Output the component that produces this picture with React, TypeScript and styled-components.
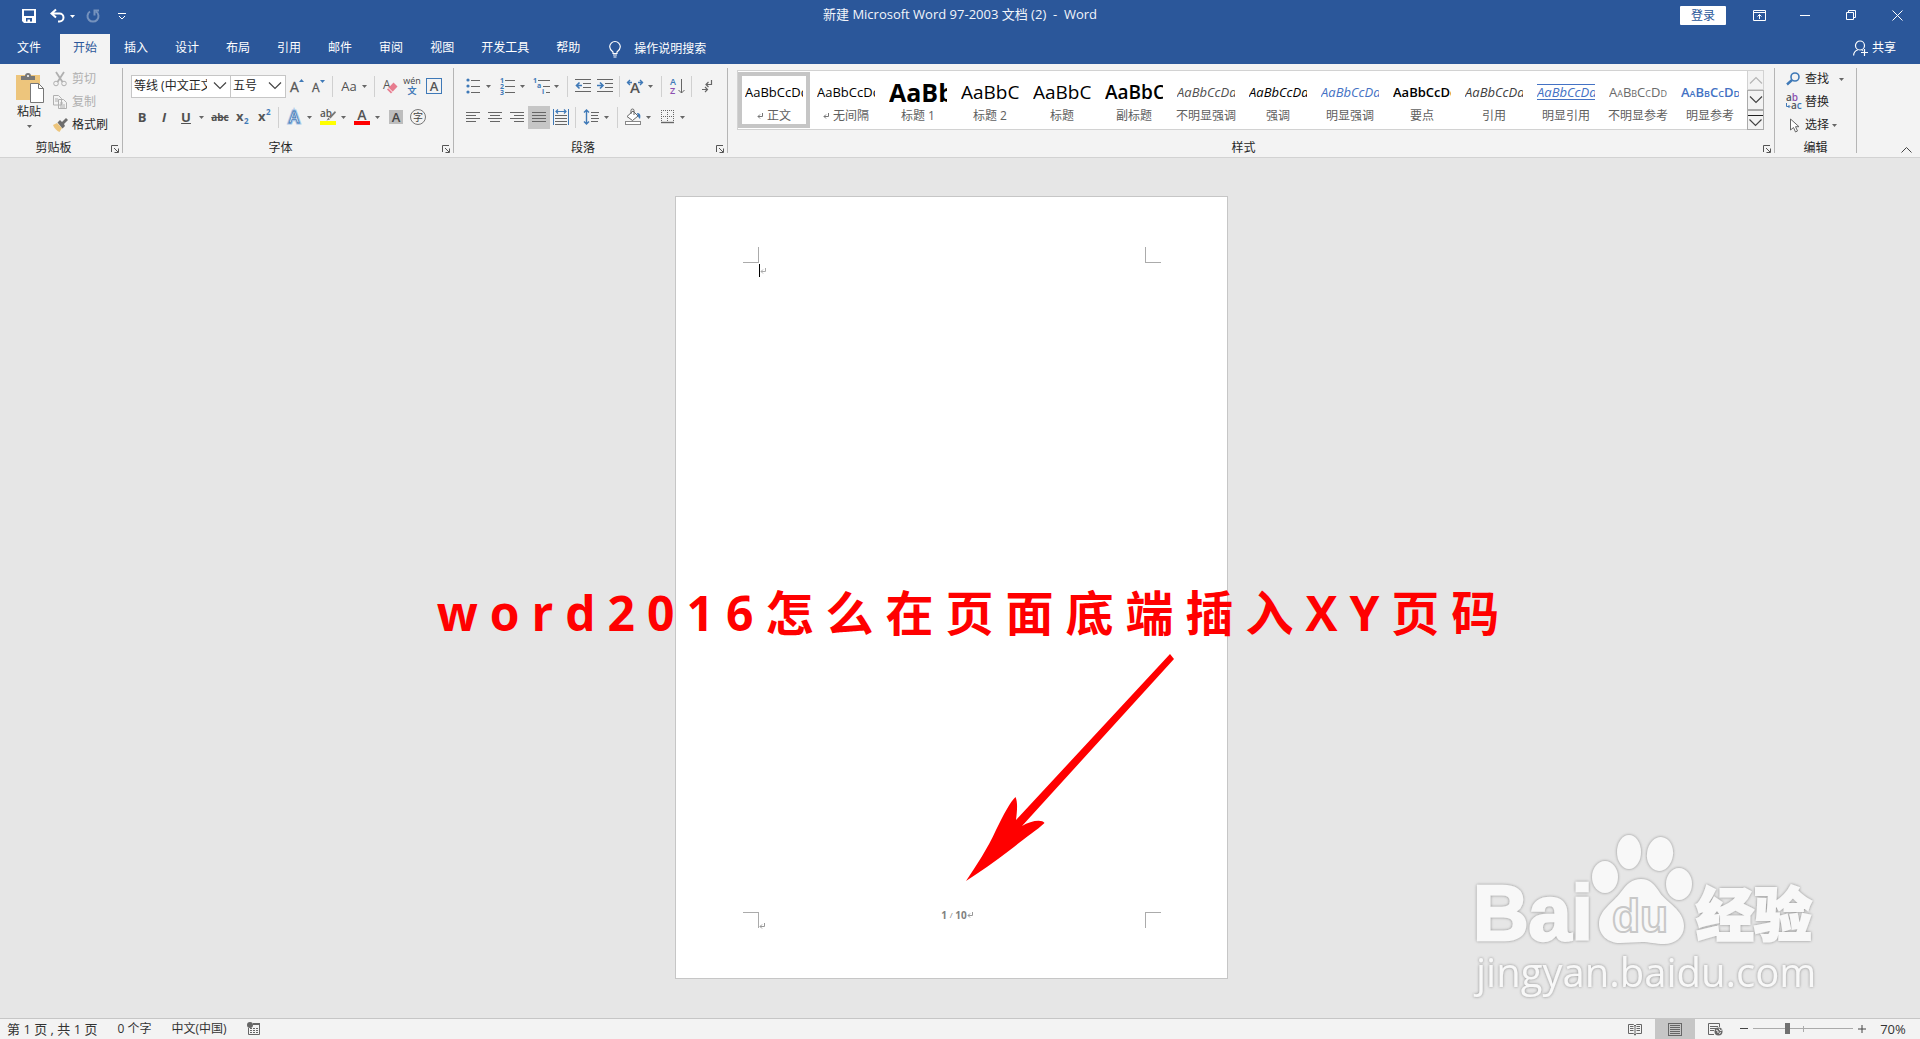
import React from "react";
import styled, { createGlobalStyle, css } from "styled-components";

const BLUE = "#2b579a";
const GREY = "#666666";
const ACCENT = "#3f79b7";

const GlobalStyle = createGlobalStyle`
  *, *::before, *::after { box-sizing: border-box; }
  body {
    margin: 0;
    background: #e6e6e6;
    color: #262626;
    font-family: "Open Sans", "Noto Sans CJK SC", sans-serif;
    font-size: 12px;
    line-height: 16px;
  }
  button, select, input {
    font: inherit;
    color: inherit;
    margin: 0;
    padding: 0;
    border: 0;
    background: none;
    border-radius: 0;
  }
  svg { display: block; flex: none; overflow: visible; }
`;

const Shell = styled.div`
  display: flex;
  flex-direction: column;
  min-height: 100vh;
  white-space: nowrap;
`;

/* ---------- title bar ---------- */

const TitleBar = styled.header`
  display: grid;
  grid-template-columns: 1fr auto 1fr;
  height: 34px;
  background: ${BLUE};
  color: #f2f5fa;
`;

const QuickAccess = styled.div`
  display: flex;
  align-items: center;
  padding: 0 0 2px 16px;
  gap: 5px;
`;

const QuickButton = styled.button<{ $w?: number; $dim?: boolean }>`
  display: flex;
  align-items: center;
  justify-content: center;
  gap: 5px;
  width: ${(p) => p.$w ?? 26}px;
  height: 24px;
  opacity: ${(p) => (p.$dim ? 0.35 : 1)};
`;

const DocTitle = styled.h1`
  margin: 0;
  font-size: 13px;
  font-weight: 400;
  line-height: 28px;
  white-space: pre;
`;

const WindowControls = styled.div`
  display: flex;
  justify-content: flex-end;
`;

const SignIn = styled.button`
  width: 46px;
  height: 19px;
  margin: 6px 10px 0 0;
  border-radius: 1px;
  background: #fff;
  color: ${BLUE};
  line-height: 18px;
`;

const WindowButton = styled.button`
  display: flex;
  align-items: center;
  justify-content: center;
  width: 46px;
  height: 30px;
`;

/* ---------- tabs ---------- */

const TabBar = styled.nav`
  display: flex;
  gap: 1px;
  height: 30px;
  background: ${BLUE};
  color: #fff;
`;

const Tab = styled.button<{ $active?: boolean; $file?: boolean }>`
  padding: ${(p) => (p.$file ? "0 18px 2px 17px" : "0 13px 2px")};
  background: ${(p) => (p.$active ? "#f3f3f3" : "transparent")};
  color: ${(p) => (p.$active ? BLUE : "#fff")};
`;

const TellMe = styled.button`
  display: flex;
  align-items: center;
  gap: 13px;
  padding: 0 15px;
`;

const Share = styled.button`
  display: flex;
  align-items: center;
  gap: 4px;
  margin-left: auto;
  padding: 0 24px 2px 0;
`;

/* ---------- ribbon ---------- */

const Ribbon = styled.section`
  display: flex;
  height: 94px;
  background: #f3f3f3;
  border-bottom: 1px solid #d2d2d2;
`;

const GroupBox = styled.div<{ $w?: number }>`
  display: flex;
  flex-direction: column;
  min-width: 0;
  ${(p) => (p.$w ? css`flex: none; width: ${p.$w}px;` : css`flex: 1;`)}
`;

const GroupContent = styled.div`
  display: flex;
  flex: 1;
  min-height: 0;
`;

const GroupFooter = styled.div`
  display: flex;
  height: 18px;
  line-height: 18px;
`;

const GroupLabel = styled.span`
  flex: 1;
  text-align: center;
`;

const Launcher = styled.button`
  display: flex;
  align-items: center;
  width: 15px;
  height: 20px;
  padding-left: 4px;
`;

const Divider = styled.div`
  flex: none;
  width: 1px;
  margin: 4px 0;
  background: #b5b5b5;
`;

const Rows = styled.div`
  display: flex;
  flex-direction: column;
  gap: 7px;
  padding: 10px 0 0 8px;
`;

const ToolRow = styled.div`
  display: flex;
  align-items: center;
  height: 24px;
`;

const Tool = styled.button<{ $w?: number; $on?: boolean }>`
  display: flex;
  flex: none;
  align-items: center;
  justify-content: center;
  gap: 5px;
  width: ${(p) => p.$w ?? 22}px;
  height: 23px;
  background: ${(p) => (p.$on ? "#c6c6c6" : "transparent")};
  color: #505050;
`;

const MoreButton = styled(Tool)`
  width: 12px;
  padding-right: 4px;
`;

const ToolSep = styled.span`
  flex: none;
  width: 1px;
  height: 21px;
  margin: 0 4px 0 3px;
  background: #d0d0d0;
`;

const Glyph = styled.span<{ $bold?: boolean; $italic?: boolean; $line?: string; $size?: number }>`
  color: #505050;
  font-size: ${(p) => p.$size ?? 13}px;
  font-weight: ${(p) => (p.$bold ? 700 : 400)};
  font-style: ${(p) => (p.$italic ? "italic" : "normal")};
  text-decoration: ${(p) => p.$line ?? "none"};
`;

const Combo = styled.label<{ $w: number }>`
  display: grid;
  flex: none;
  align-items: center;
  width: ${(p) => p.$w}px;
  height: 23px;
  margin-right: -1px;
  border: 1px solid #c6c6c6;
  background: #fff;

  & > * { grid-area: 1 / 1; }
  & > svg { justify-self: end; margin-right: 3px; pointer-events: none; }
`;

const ComboSelect = styled.select`
  appearance: none;
  width: 100%;
  min-width: 0;
  height: 21px;
  padding: 0 23px 0 2px;
  overflow: hidden;
`;

const PasteButton = styled.button`
  display: flex;
  flex-direction: column;
  align-items: center;
  width: 44px;
  margin-left: 7px;
  padding-top: 8px;
  & > span { margin: 1px 0 5px; }
`;

const Commands = styled.div`
  display: flex;
  flex-direction: column;
  gap: 1px;
  padding: 4px 0 0 2px;
`;

const Command = styled.button<{ $off?: boolean }>`
  display: flex;
  align-items: center;
  gap: 4px;
  height: 22px;
  color: ${(p) => (p.$off ? "#b0b0b0" : "#262626")};
`;

const EditCommands = styled(Commands)`
  padding-left: 11px;
  & > button { gap: 3px; }
`;

const RibbonEnd = styled.div`
  display: flex;
  flex: none;
  align-items: flex-end;
  justify-content: flex-end;
  width: 63px;
  padding: 0 8px 2px 0;
`;

const CollapseButton = styled.button`
  padding: 2px 0;
`;

/* ---------- style gallery ---------- */

const Gallery = styled.div`
  display: flex;
  flex: 1;
  min-width: 0;
  height: 60px;
  margin: 6px 10px 0 9px;
  border: 1px solid #d2d2d2;
  border-right: 0;
  background: #fff;
`;

const GalleryItems = styled.div`
  display: flex;
  flex: 1;
  min-width: 0;
  overflow: hidden;
  padding: 1px 0;
`;

const StyleItem = styled.button<{ $on?: boolean }>`
  display: flex;
  flex: 0 0 72px;
  flex-direction: column;
  align-items: center;
  border: 4px solid ${(p) => (p.$on ? "#c6c6c6" : "transparent")};
`;

type Look = "plain" | "h1" | "h2" | "title" | "subtitle";

const looks: Record<Look, ReturnType<typeof css>> = {
  plain: css`font-size: 13px;`,
  h1: css`font-size: 25px; font-weight: 700;`,
  h2: css`font-size: 19px;`,
  title: css`font-size: 19px;`,
  subtitle: css`font-size: 19px; font-weight: 600;`,
};

const PreviewBox = styled.span`
  display: flex;
  align-items: center;
  width: 58px;
  height: 32px;
  overflow: hidden;
`;

const Preview = styled.span<{
  $look: Look;
  $color?: string;
  $italic?: boolean;
  $bold?: boolean;
  $caps?: boolean;
  $rules?: boolean;
}>`
  flex: none;
  line-height: 32px;
  color: ${(p) => p.$color ?? "#000"};
  ${(p) => looks[p.$look]}
  ${(p) => p.$italic && css`font-style: italic;`}
  ${(p) => p.$bold && css`font-weight: 600;`}
  ${(p) => p.$caps && css`font-variant: small-caps;`}
  ${(p) =>
    p.$rules &&
    css`
      line-height: 14px;
      border-top: 1px solid ${p.$color};
      border-bottom: 1px solid ${p.$color};
    `}
`;

const StyleName = styled.span`
  display: flex;
  align-items: center;
  justify-content: center;
  gap: 4px;
  color: #606060;
  line-height: 16px;
`;

const GalleryScroll = styled.div`
  display: flex;
  flex: none;
  flex-direction: column;
  width: 17px;
  margin: -1px 0;
`;

const ScrollButton = styled.button<{ $off?: boolean }>`
  display: flex;
  flex: 1;
  align-items: center;
  justify-content: center;
  border: 1px solid ${(p) => (p.$off ? "#d2d2d2" : "#ababab")};
  background: #f3f3f3;
`;

/* ---------- document ---------- */

const Canvas = styled.main`
  position: relative;
  flex: 1;
  padding: 38px 17px 39px 0;
  background: #e6e6e6;
`;

const Page = styled.article`
  display: flex;
  flex-direction: column;
  width: 553px;
  height: 783px;
  margin: 0 auto;
  padding: 50px 66px 49px 67px;
  border: 1px solid #c6c6c6;
  background: #fff;
`;

const MarginRow = styled.div`
  display: flex;
  justify-content: space-between;
`;

const Corner = styled.span<{ $v: "top" | "bottom"; $h: "left" | "right" }>`
  width: 16px;
  height: 16px;
  border: 0 solid #ababab;
  border-${(p) => p.$v}-width: 1px;
  border-${(p) => p.$h}-width: 1px;
`;

const Body = styled.div`
  display: flex;
  flex: 1;
  flex-direction: column;
  padding: 1px 0 0 16px;
`;

const Caret = styled.div`
  display: flex;
  align-items: center;
  height: 13px;
  border-left: 1px solid #000;
`;

const FooterText = styled.p`
  display: flex;
  align-items: center;
  height: 6px;
  margin: 0;
  padding-left: 10px;
  color: #808080;
  font-size: 10px;
  font-weight: 700;
  white-space: pre;
`;

const Slash = styled.span`
  font-size: 8px;
  font-weight: 400;
`;

const EndMark = styled.div`
  padding-left: 16px;
  margin-top: -5px;
`;

const Headline = styled.p`
  position: absolute;
  top: 420px;
  left: 0;
  right: 0;
  margin: 0;
  padding-left: 28px;
  color: #ff0000;
  font-family: "Open Sans", "Noto Sans CJK SC", sans-serif;
  font-size: 48px;
  font-weight: 700;
  line-height: 70px;
  letter-spacing: 12px;
  text-align: center;
`;

const Arrow = styled.svg`
  position: absolute;
  top: 494px;
  left: calc(50% + 4px);
`;

const Watermark = styled.svg`
  position: absolute;
  right: 70px;
  bottom: 8px;
`;

/* ---------- status bar ---------- */

const StatusBar = styled.footer`
  display: flex;
  align-items: center;
  height: 21px;
  padding: 0 0 1px 7px;
  border-top: 1px solid #c6c6c6;
  background: #f3f3f3;
  color: #333;
`;

const StatusItem = styled.button<{ $wide?: boolean }>`
  margin-right: 20px;
  font-size: ${(p) => (p.$wide ? 13 : 12)}px;
`;

const ViewSwitch = styled.div`
  display: flex;
  height: 20px;
  margin: 0 0 -1px auto;
`;

const ViewButton = styled.button<{ $on?: boolean }>`
  display: flex;
  align-items: center;
  justify-content: center;
  width: 40px;
  background: ${(p) => (p.$on ? "#c6c6c6" : "transparent")};
`;

const ZoomButton = styled.button`
  display: flex;
  align-items: center;
  justify-content: center;
  width: 18px;
  height: 20px;
`;

const ZoomRange = styled.input`
  appearance: none;
  width: 100px;
  height: 20px;
  background:
    linear-gradient(#ababab, #ababab) center / 1px 6px no-repeat,
    linear-gradient(#ababab, #ababab) center / 100% 1px no-repeat;
  &::-webkit-slider-thumb {
    appearance: none;
    width: 5px;
    height: 11px;
    background: #707070;
  }
`;

const ZoomValue = styled.button`
  width: 49px;
  padding-right: 5px;
  font-size: 13px;
  text-align: center;
`;

/* ---------- icons ---------- */

const Svg = ({ w, h, children }: { w: number; h: number; children: React.ReactNode }) => (
  <svg width={w} height={h} viewBox={`0 0 ${w} ${h}`} fill="none" aria-hidden="true">
    {children}
  </svg>
);

const Triangle = ({ color = GREY }: { color?: string }) => (
  <Svg w={5} h={3}><path d="M0 0h5L2.5 3z" fill={color} /></Svg>
);

const Chevron = ({ up, color = "#444" }: { up?: boolean; color?: string }) => (
  <Svg w={14} h={8}><path d={up ? "M1 7.5 7 1.5l6 6" : "M1 .5l6 6 6-6"} stroke={color} strokeWidth="1.2" /></Svg>
);

const Return = ({ color = "#777" }: { color?: string }) => (
  <Svg w={6} h={6}><path d="M5.5 0v3.500H1M3 1.500 1 3.500 3 5.500" stroke={color} /></Svg>
);

const LauncherIcon = () => (
  <Svg w={8} h={8}><path d="M.5 7V.5H7M3 3l4 4M7.500 3.500v4h-4" stroke="#555" /></Svg>
);

const SaveIcon = () => (
  <Svg w={14} h={14}>
    <path d="M0 0h14v14H2l-2-2zM2 1.500v5.500h10V1.500zM4 9v3.500h1.500V10.500H8v2h2V9z" fill="#fff" fillRule="evenodd" />
  </Svg>
);
const UndoIcon = () => (
  <Svg w={15} h={14}><path d="M1.500 4.500h8a4 4 0 0 1 0 8H8M6 .5l-4.500 4 4.500 4" stroke="#fff" strokeWidth="2" /></Svg>
);
const RedoIcon = () => (
  <Svg w={14} h={14}><path d="M4 2.500A5.500 5.500 0 1 0 10 2.500M8.500 6.500V1.500H13" stroke="#fff" strokeWidth="2" /></Svg>
);
const CustomizeIcon = () => (
  <Svg w={8} h={7}><path d="M0 .5h8M1 3l3 3 3-3" stroke="#fff" /></Svg>
);

const lines = (rows: [number, number][], color = GREY, top = 0.5, step = 3) => (
  <path d={rows.map(([a, b], i) => `M${a} ${top + i * step}H${b}`).join("")} stroke={color} />
);

const PasteIcon = () => (
  <Svg w={29} h={31}>
    <rect x="1" y="3" width="24" height="25" fill="#edc57c" />
    <path d="M6 8V4h4a3 3 0 0 1 6 0h4v4z" fill="#777" />
    <circle cx="13" cy="4" r="1" fill="#fff" />
    <path d="M15.500 11.500h8l5 5v14h-13z" fill="#fff" stroke="#777" />
    <path d="M23.500 11.500v5h5" stroke="#777" />
  </Svg>
);
const CutIcon = () => (
  <Svg w={15} h={15}>
    <path d="M3 0l6.500 10M11 0 4.500 10" stroke="#b0b0b0" strokeWidth="1.800" />
    <circle cx="3" cy="11.500" r="2.300" stroke="#b0b0b0" /><circle cx="11" cy="11.500" r="2.300" stroke="#b0b0b0" />
  </Svg>
);
const CopyIcon = () => (
  <Svg w={15} h={14}>
    <path d="M.5 .5h5l3 3v6.500h-8zM5.500 4.500h5l3 3v6h-8z" fill="#f3f3f3" stroke="#b0b0b0" />
    <path d="M2 4h3M2 6h3M7 8h3M7 10h5M7 12h5" stroke="#b0b0b0" />
  </Svg>
);
const BrushIcon = () => (
  <Svg w={15} h={14}>
    <path d="M0 7l4-2 5 5-2.500 4C4 13 1 10 0 7z" fill="#edc57c" />
    <path d="M4.500 4.500 7 2l2 2 4-4 2 2-4 4 1 2-2.500 2.500z" fill="#6d6d6d" />
  </Svg>
);

const GrowIcon = ({ down }: { down?: boolean }) => (
  <Svg w={14} h={16}>
    <text x="1" y="14" fontSize={down ? 12 : 14} fill="#555" stroke="#555" strokeWidth=".3">A</text>
    <path d={down ? "M9 2h5l-2.500 3z" : "M10 4h5L12.500 1z"} fill={ACCENT} />
  </Svg>
);
const EraserIcon = () => (
  <Svg w={14} h={17}>
    <text x="0" y="11" fontSize="12" fill="#555">A</text>
    <path d="M4 11.500 10.500 4.500l4 4-6.500 7z" fill="#e77c8e" /><path d="M5.500 10l4 4" stroke="#fff" />
  </Svg>
);
const PhoneticIcon = () => (
  <Svg w={18} h={18}>
    <text x="9" y="7" textAnchor="middle" fontSize="9" fill="#444">wén</text>
    <text x="9" y="17" textAnchor="middle" fontSize="9" fontWeight="700" fill={ACCENT}>文</text>
  </Svg>
);
const BorderAIcon = () => (
  <Svg w={16} h={16}>
    <rect x=".5" y=".5" width="15" height="15" stroke={ACCENT} />
    <text x="8" y="13" textAnchor="middle" fontSize="13" fontWeight="600" fill="#555">A</text>
  </Svg>
);
const ScriptIcon = ({ sup }: { sup?: boolean }) => (
  <Svg w={12} h={16}>
    <text x="0" y="12" fontSize="13" fontWeight="700" fill="#555">x</text>
    <text x="8" y={sup ? 6 : 15} fontSize="8" fontWeight="700" fill={ACCENT}>2</text>
  </Svg>
);
const EffectsIcon = () => (
  <Svg w={16} h={17}>
    <text x="8" y="14" textAnchor="middle" fontSize="16" fontWeight="600" fill="#fff" stroke="#a9c7e8" strokeWidth="3" paintOrder="stroke">A</text>
    <text x="8" y="14" textAnchor="middle" fontSize="16" fontWeight="600" fill="#fff" stroke={ACCENT} strokeWidth=".9">A</text>
  </Svg>
);
const HighlightIcon = () => (
  <Svg w={16} h={16}>
    <text x="0" y="8" fontSize="10" fontWeight="600" fill="#555">ab</text>
    <path d="M15 2 9 8l1.500 1.500L16 3.500zM8.500 8.500l1.500 2-3.500 1z" fill="#777" />
    <rect y="12" width="16" height="4" fill="#ff0" />
  </Svg>
);
const FontColorIcon = () => (
  <Svg w={16} h={16}>
    <text x="8" y="11" textAnchor="middle" fontSize="14" fontWeight="600" fill="#555">A</text>
    <rect y="12" width="16" height="4" fill="#f00" />
  </Svg>
);
const ShadeIcon = () => (
  <Svg w={14} h={14}>
    <rect width="14" height="14" fill="#bdbdbd" />
    <text x="7" y="12" textAnchor="middle" fontSize="13" fontWeight="600" fill="#444">A</text>
  </Svg>
);
const CircleIcon = () => (
  <Svg w={16} h={16}>
    <circle cx="8" cy="8" r="7.500" stroke="#777" />
    <text x="8" y="12" textAnchor="middle" fontSize="10" fill="#444">字</text>
  </Svg>
);

const BulletsIcon = () => (
  <Svg w={14} h={16}>
    <circle cx="2" cy="2" r="1.600" fill={ACCENT} /><circle cx="2" cy="8" r="1.600" fill={ACCENT} /><circle cx="2" cy="14" r="1.600" fill={ACCENT} />
    {lines([[5, 14], [5, 14], [5, 14]], GREY, 2.5, 6)}
  </Svg>
);
const NumbersIcon = () => (
  <Svg w={15} h={18}>
    {["1", "2", "3"].map((n, i) => (
      <text key={n} x="0" y={6 + i * 6} fontSize="7" fontWeight="700" fill={ACCENT}>{n}</text>
    ))}
    {lines([[5, 15], [5, 15], [5, 15]], GREY, 3.5, 6)}
  </Svg>
);
const MultiIcon = () => (
  <Svg w={17} h={18}>
    <text x="0" y="6" fontSize="7" fontWeight="700" fill={ACCENT}>1</text>
    <text x="4" y="11" fontSize="7" fontWeight="700" fill={ACCENT}>a</text>
    <text x="9" y="17" fontSize="7" fontWeight="700" fill={ACCENT}>i</text>
    <path d="M5 3.500h12M10 9.500h7M13 15.500h4" stroke={GREY} />
  </Svg>
);
const IndentIcon = ({ out }: { out?: boolean }) => (
  <Svg w={16} h={14}>
    <path d="M0 .5h16M8 4.500h8M8 8.500h8M0 12.500h16" stroke={GREY} />
    <path d={out ? "M7 6.500H2M4.500 3.500l-3 3 3 3" : "M0 6.500h5M3 3.500l3 3-3 3"} stroke={ACCENT} strokeWidth="1.600" />
  </Svg>
);
const ScaleIcon = () => (
  <Svg w={16} h={14}>
    <text x="8" y="14" textAnchor="middle" fontSize="15" fontWeight="600" fill="#555">A</text>
    <path d="M0 3.500h5M11 3.500h5M3 1 .5 3.500 3 6M13 1l2.500 2.500L13 6" stroke={ACCENT} strokeWidth="1.400" />
  </Svg>
);
const SortIcon = () => (
  <Svg w={15} h={17}>
    <text x="0" y="7" fontSize="9" fontWeight="600" fill={ACCENT}>A</text>
    <text x="0" y="16" fontSize="9" fontWeight="600" fill="#8c4fb0">Z</text>
    <path d="M11.500 1v14M8.500 12l3 3 3-3" stroke={GREY} />
  </Svg>
);
const MarksIcon = () => (
  <Svg w={12} h={14}>
    <path d="M10.500 1v4.500H5M7.500 3 5 5.500 7.500 8M1 10.500h5M4 8l2.500 2.500L4 13" stroke={GREY} strokeWidth="1.200" />
  </Svg>
);
const AlignIcon = ({ kind }: { kind: "left" | "center" | "right" | "full" }) => {
  const rows: Record<string, [number, number][]> = {
    left: [[0, 14], [0, 10], [0, 14], [0, 10]],
    center: [[0, 14], [2, 12], [0, 14], [2, 12]],
    right: [[0, 14], [4, 14], [0, 14], [4, 14]],
    full: [[0, 14], [0, 14], [0, 14], [0, 14]],
  };
  return <Svg w={14} h={11}>{lines(rows[kind], GREY)}</Svg>;
};
const DistributeIcon = () => (
  <Svg w={16} h={16}>
    <path d="M.5 0v16M15.500 0v16" stroke={ACCENT} />
    <path d="M3 2.500h10M5 .5l-2 2 2 2M11 .5l2 2-2 2" stroke={ACCENT} strokeWidth="1.200" />
    {lines([[2, 14], [2, 14], [2, 14], [2, 14]], GREY, 6.500, 3)}
  </Svg>
);
const SpacingIcon = () => (
  <Svg w={15} h={16}>
    <path d="M2.500 1v14M0 3.500 2.500 1 5 3.500M0 12.500 2.500 15 5 12.500" stroke={ACCENT} strokeWidth="1.400" />
    {lines([[7, 15], [7, 14], [7, 15], [7, 14]], GREY, 3.500, 3)}
  </Svg>
);
const BucketIcon = () => (
  <Svg w={17} h={16}>
    <path d="M2 7.500 8 2l5 5-5.500 4.500z" fill="#fff" stroke={GREY} />
    <path d="M6 5V1.500a1.500 1.500 0 0 1 3 0V6" stroke={GREY} />
    <path d="M12 4c3 0 4 2 3 6-1-1-2-2-2-3z" fill={ACCENT} />
    <rect x=".5" y="12.500" width="15" height="3" fill="#fff" stroke="#888" />
  </Svg>
);
const BordersIcon = () => (
  <Svg w={13} h={14}>
    <path d="M0 .5h13M0 6.500h13M.5 0v12M6.500 0v12M12.500 0v12" stroke={GREY} strokeDasharray="1 1" />
    <path d="M0 12.500h13" stroke={GREY} strokeWidth="1.400" />
  </Svg>
);

const FindIcon = () => (
  <Svg w={16} h={14}>
    <circle cx="9" cy="5" r="4" stroke={ACCENT} strokeWidth="1.600" /><path d="M6 8l-5 4.500" stroke={ACCENT} strokeWidth="2.400" />
  </Svg>
);
const ReplaceIcon = () => (
  <Svg w={16} h={16}>
    <text x="0" y="7" fontSize="10" fontWeight="600" fill="#555">a<tspan fill="#8c4fb0">b</tspan></text>
    <text x="5" y="15" fontSize="10" fontWeight="600" fill="#555">a<tspan fill={ACCENT}>c</tspan></text>
    <path d="M.5 9v3.500h3M2.500 11l1.500 1.500L2.500 14" stroke={ACCENT} />
  </Svg>
);
const SelectIcon = () => (
  <Svg w={16} h={15}>
    <path d="M4.500 1v11l3-2.500 2 4.500 2-1-2-4.300h3.500z" fill="#fff" stroke={GREY} />
  </Svg>
);

const BookIcon = () => (
  <Svg w={14} h={13}>
    <path d="M.5 1.500h5L7 3l1.500-1.500h5v9h-5L7 12l-1.500-1.500h-5zM7 3v9.500" stroke={GREY} />
    <path d="M2 3.500h3.500M2 5.500h3.500M2 7.500h3.500M8.500 3.500H12M8.500 5.500H12M8.500 7.500H12" stroke={GREY} />
  </Svg>
);
const PrintIcon = () => (
  <Svg w={14} h={13}>
    <rect x=".5" y=".5" width="13" height="12" stroke={GREY} />
    {lines([[2, 12], [2, 12], [2, 12], [2, 12], [2, 12]], GREY, 2.500, 2)}
  </Svg>
);
const WebIcon = () => (
  <Svg w={15} h={13}>
    <path d="M6 11.500H.5V.5h11V4M2 3.500h8M2 5.500h6M2 7.500h4" stroke={GREY} />
    <circle cx="10.500" cy="8.500" r="4" fill={GREY} /><path d="M8 7l2 1v2M11 5.500l1 2 2-.5M11.500 11l1-2" stroke="#f3f3f3" />
  </Svg>
);
const MacroIcon = () => (
  <Svg w={14} h={13}>
    <path d="M1.500 6v6.500h11v-11H6" stroke={GREY} /><path d="M6 2h7" stroke={GREY} strokeWidth="2" />
    <path d="M3 6.500h8M3 8.500h8M3 10.500h8" stroke={GREY} strokeDasharray="2 1" /><circle cx="3" cy="3" r="3" fill={GREY} />
  </Svg>
);

/* ---------- data ---------- */

const tabs = ["插入", "设计", "布局", "引用", "邮件", "审阅", "视图", "开发工具", "帮助"];

interface StyleDef {
  name: string;
  look?: Look;
  mark?: boolean;
  color?: string;
  italic?: boolean;
  bold?: boolean;
  caps?: boolean;
  rules?: boolean;
}

const styleDefs: StyleDef[] = [
  { name: "正文", mark: true },
  { name: "无间隔", mark: true },
  { name: "标题 1", look: "h1" },
  { name: "标题 2", look: "h2" },
  { name: "标题", look: "title" },
  { name: "副标题", look: "subtitle" },
  { name: "不明显强调", color: "#505050", italic: true },
  { name: "强调", italic: true },
  { name: "明显强调", color: "#4472c4", italic: true },
  { name: "要点", bold: true },
  { name: "引用", color: "#404040", italic: true },
  { name: "明显引用", color: "#4472c4", italic: true, rules: true },
  { name: "不明显参考", color: "#6a6a6a", caps: true },
  { name: "明显参考", color: "#4472c4", caps: true, bold: true },
];

const sample: Record<Look, string> = {
  plain: "AaBbCcDd",
  h1: "AaBb",
  h2: "AaBbC",
  title: "AaBbC",
  subtitle: "AaBbC",
};

const Group = ({ label, w, launcher = true, children }: {
  label: string; w?: number; launcher?: boolean; children: React.ReactNode;
}) => (
  <GroupBox $w={w}>
    <GroupContent>{children}</GroupContent>
    <GroupFooter>
      <GroupLabel>{label}</GroupLabel>
      {launcher && <Launcher aria-label={`${label}设置`}><LauncherIcon /></Launcher>}
    </GroupFooter>
  </GroupBox>
);

const More = () => <MoreButton aria-label="更多"><Triangle /></MoreButton>;

export default function App() {
  return (
    <Shell>
      <GlobalStyle />
      <TitleBar>
        <QuickAccess>
          <QuickButton aria-label="保存"><SaveIcon /></QuickButton>
          <QuickButton $w={30} aria-label="撤消"><UndoIcon /><Triangle color="#fff" /></QuickButton>
          <QuickButton $w={22} $dim aria-label="重复"><RedoIcon /></QuickButton>
          <QuickButton $w={26} aria-label="自定义快速访问工具栏"><CustomizeIcon /></QuickButton>
        </QuickAccess>
        <DocTitle>新建 Microsoft Word 97-2003 文档 (2)  -  Word</DocTitle>
        <WindowControls>
          <SignIn>登录</SignIn>
          <WindowButton aria-label="功能区显示选项">
            <Svg w={13} h={11}><path d="M.5.5h12v10H.5zM0 2.500h13M6.500 9V4.500M4.500 6.500l2-2 2 2" stroke="#fff" /></Svg>
          </WindowButton>
          <WindowButton aria-label="最小化"><Svg w={10} h={1}><path d="M0 .5h10" stroke="#fff" /></Svg></WindowButton>
          <WindowButton aria-label="还原">
            <Svg w={10} h={10}><path d="M.5 2.500h7v7h-7zM2.500 2.500v-2h7v7h-2" stroke="#fff" /></Svg>
          </WindowButton>
          <WindowButton aria-label="关闭"><Svg w={11} h={11}><path d="M.5.5l10 10M10.500.5l-10 10" stroke="#fff" /></Svg></WindowButton>
        </WindowControls>
      </TitleBar>

      <TabBar>
        <Tab $file>文件</Tab>
        <Tab $active>开始</Tab>
        {tabs.map((t) => <Tab key={t}>{t}</Tab>)}
        <TellMe>
          <Svg w={12} h={17}>
            <path d="M4 12.500V11C2 9.500 .7 8 .7 5.800a5.300 5.300 0 0 1 10.600 0C11.300 8 10 9.500 8 11v1.500zM4 14h4M4.500 16h3" stroke="#fff" strokeWidth="1.200" />
          </Svg>
          操作说明搜索
        </TellMe>
        <Share>
          <Svg w={15} h={16}>
            <circle cx="7" cy="5.500" r="4.500" stroke="#fff" strokeWidth="1.200" />
            <path d="M.6 15.500c0-3 2-5 4.400-5.800M8.500 9.800c.8.300 1 .4 1.500.8M11.500 9v7M8 12.500h7" stroke="#fff" strokeWidth="1.200" />
          </Svg>
          共享
        </Share>
      </TabBar>

      <Ribbon>
        <Group label="剪贴板" w={122}>
          <PasteButton><PasteIcon /><span>粘贴</span><Triangle /></PasteButton>
          <Commands>
            <Command $off><CutIcon />剪切</Command>
            <Command $off><CopyIcon />复制</Command>
            <Command><BrushIcon />格式刷</Command>
          </Commands>
        </Group>
        <Divider />
        <Group label="字体" w={330}>
          <Rows>
            <ToolRow>
              <Combo $w={100}>
                <ComboSelect aria-label="字体"><option>等线 (中文正文)</option></ComboSelect>
                <Chevron />
              </Combo>
              <Combo $w={56}>
                <ComboSelect aria-label="字号"><option>五号</option></ComboSelect>
                <Chevron />
              </Combo>
              <Tool aria-label="增大字号"><GrowIcon /></Tool>
              <Tool aria-label="减小字号"><GrowIcon down /></Tool>
              <ToolSep />
              <Tool $w={34} aria-label="更改大小写"><Glyph>Aa</Glyph><Triangle /></Tool>
              <ToolSep />
              <Tool aria-label="清除所有格式"><EraserIcon /></Tool>
              <Tool aria-label="拼音指南"><PhoneticIcon /></Tool>
              <Tool aria-label="字符边框"><BorderAIcon /></Tool>
            </ToolRow>
            <ToolRow>
              <Tool><Glyph $bold>B</Glyph></Tool>
              <Tool><Glyph $italic $bold>I</Glyph></Tool>
              <Tool><Glyph $bold $line="underline">U</Glyph></Tool>
              <More />
              <Tool><Glyph $bold $size={10} $line="line-through">abc</Glyph></Tool>
              <Tool aria-label="下标"><ScriptIcon /></Tool>
              <Tool aria-label="上标"><ScriptIcon sup /></Tool>
              <ToolSep />
              <Tool aria-label="文本效果"><EffectsIcon /></Tool>
              <More />
              <Tool aria-label="突出显示"><HighlightIcon /></Tool>
              <More />
              <Tool aria-label="字体颜色"><FontColorIcon /></Tool>
              <More />
              <Tool aria-label="字符底纹"><ShadeIcon /></Tool>
              <Tool aria-label="带圈字符"><CircleIcon /></Tool>
            </ToolRow>
          </Rows>
        </Group>
        <Divider />
        <Group label="段落" w={273}>
          <Rows>
            <ToolRow>
              <Tool aria-label="项目符号"><BulletsIcon /></Tool>
              <More />
              <Tool aria-label="编号"><NumbersIcon /></Tool>
              <More />
              <Tool aria-label="多级列表"><MultiIcon /></Tool>
              <More />
              <ToolSep />
              <Tool aria-label="减少缩进量"><IndentIcon out /></Tool>
              <Tool aria-label="增加缩进量"><IndentIcon /></Tool>
              <ToolSep />
              <Tool aria-label="中文版式"><ScaleIcon /></Tool>
              <More />
              <ToolSep />
              <Tool aria-label="排序"><SortIcon /></Tool>
              <ToolSep />
              <Tool aria-label="显示编辑标记"><MarksIcon /></Tool>
            </ToolRow>
            <ToolRow>
              <Tool aria-label="左对齐"><AlignIcon kind="left" /></Tool>
              <Tool aria-label="居中"><AlignIcon kind="center" /></Tool>
              <Tool aria-label="右对齐"><AlignIcon kind="right" /></Tool>
              <Tool $on aria-label="两端对齐"><AlignIcon kind="full" /></Tool>
              <Tool aria-label="分散对齐"><DistributeIcon /></Tool>
              <ToolSep />
              <Tool aria-label="行距"><SpacingIcon /></Tool>
              <More />
              <ToolSep />
              <Tool aria-label="底纹"><BucketIcon /></Tool>
              <More />
              <Tool aria-label="边框"><BordersIcon /></Tool>
              <More />
            </ToolRow>
          </Rows>
        </Group>
        <Divider />
        <Group label="样式">
          <Gallery>
            <GalleryItems>
              {styleDefs.map((s, i) => {
                const look = s.look ?? "plain";
                return (
                  <StyleItem key={s.name} $on={i === 0}>
                    <PreviewBox>
                      <Preview $look={look} $color={s.color} $italic={s.italic} $bold={s.bold} $caps={s.caps} $rules={s.rules}>
                        {sample[look]}
                      </Preview>
                    </PreviewBox>
                    <StyleName>{s.mark && <Return />}{s.name}</StyleName>
                  </StyleItem>
                );
              })}
            </GalleryItems>
            <GalleryScroll>
              <ScrollButton $off aria-label="上一行"><Chevron up color="#b5b5b5" /></ScrollButton>
              <ScrollButton aria-label="下一行"><Chevron /></ScrollButton>
              <ScrollButton aria-label="其他样式">
                <Svg w={15} h={13}><path d="M0 1.500h15" stroke="#222" /><path d="M1.500 5.500l6 6 6-6" stroke="#444" strokeWidth="1.200" /></Svg>
              </ScrollButton>
            </GalleryScroll>
          </Gallery>
        </Group>
        <Divider />
        <Group label="编辑" w={81} launcher={false}>
          <EditCommands>
            <Command><FindIcon />查找<Svg w={12} h={3}><path d="M7 0h5L9.500 3z" fill={GREY} /></Svg></Command>
            <Command><ReplaceIcon />替换</Command>
            <Command><SelectIcon />选择<Triangle /></Command>
          </EditCommands>
        </Group>
        <Divider />
        <RibbonEnd>
          <CollapseButton aria-label="折叠功能区">
            <Svg w={11} h={6}><path d="M.5 5.500l5-5 5 5" stroke="#444" /></Svg>
          </CollapseButton>
        </RibbonEnd>
      </Ribbon>

      <Canvas>
        <Page>
          <MarginRow>
            <Corner $v="bottom" $h="right" />
            <Corner $v="bottom" $h="left" />
          </MarginRow>
          <Body><Caret><Return color="#aaa" /></Caret></Body>
          <MarginRow>
            <Corner $v="top" $h="right" />
            <FooterText>1 <Slash>/</Slash> 10<Return color="#999" /></FooterText>
            <Corner $v="top" $h="left" />
          </MarginRow>
          <EndMark><Return color="#999" /></EndMark>
        </Page>

        <Headline>word2016怎么在页面底端插入XY页码</Headline>
        <Arrow width="212" height="232" viewBox="0 0 212 232" aria-hidden="true">
          <path
            d="M206 2 L210 7 L58 174 C66 169 78 167 80.500 171 C72 179 58 188 46 198 C30 210 16 220 2 229 C12 214 24 196 32 178 C40 162 46 150 51.500 145 C54 150 53 160 52 168 Z"
            fill="#f00"
          />
        </Arrow>

        <Watermark width="400" height="190" viewBox="0 0 400 190" aria-label="Baidu 经验">
          <defs>
            <filter id="edge" x="-10%" y="-10%" width="120%" height="120%">
              <feDropShadow dx="0" dy="0" stdDeviation="1.600" floodColor="#8c8c8c" floodOpacity="1" />
            </filter>
          </defs>
          <g fill="#f8f8f8" filter="url(#edge)">
            <text x="23" y="120" fontFamily="Liberation Sans, sans-serif" fontWeight="700" fontSize="77" stroke="#f8f8f8" strokeWidth="2.500">Bai</text>
            <ellipse cx="155" cy="57" rx="13" ry="16" />
            <ellipse cx="179" cy="32" rx="12" ry="17" />
            <ellipse cx="210" cy="34" rx="13" ry="17" transform="rotate(8 210 34)" />
            <ellipse cx="229" cy="64" rx="13" ry="16" />
            <path d="M191 59c9 0 14 6 19 14 6 9 24 17 24 33 0 11-9 18-20 18-9 0-14-2-22-2s-14 1-22 1c-12 0-21-8-21-19 0-14 14-21 22-32 6-8 11-13 20-13z" />
            <text x="246" y="116" fontFamily="Noto Sans CJK SC, sans-serif" fontWeight="900" fontSize="58" stroke="#f8f8f8" strokeWidth="2">经验</text>
            <text x="26" y="167" fontSize="40">jingyan.baidu.com</text>
          </g>
          <text x="162" y="112" fontFamily="Liberation Sans, sans-serif" fontWeight="700" fontSize="46" fill="#f8f8f8" stroke="#c8c8c8" strokeWidth="2">du</text>
        </Watermark>
      </Canvas>

      <StatusBar>
        <StatusItem $wide>第 1 页 , 共 1 页</StatusItem>
        <StatusItem>0 个字</StatusItem>
        <StatusItem>中文(中国)</StatusItem>
        <StatusItem aria-label="宏录制"><MacroIcon /></StatusItem>
        <ViewSwitch>
          <ViewButton aria-label="阅读视图"><BookIcon /></ViewButton>
          <ViewButton $on aria-label="页面视图"><PrintIcon /></ViewButton>
          <ViewButton aria-label="Web 版式视图"><WebIcon /></ViewButton>
        </ViewSwitch>
        <ZoomButton aria-label="缩小"><Svg w={8} h={1}><path d="M0 .5h8" stroke="#444" /></Svg></ZoomButton>
        <ZoomRange type="range" min={0} max={100} defaultValue={34} aria-label="缩放" />
        <ZoomButton aria-label="放大"><Svg w={8} h={8}><path d="M0 4h8M4 0v8" stroke="#444" /></Svg></ZoomButton>
        <ZoomValue>70%</ZoomValue>
      </StatusBar>
    </Shell>
  );
}
